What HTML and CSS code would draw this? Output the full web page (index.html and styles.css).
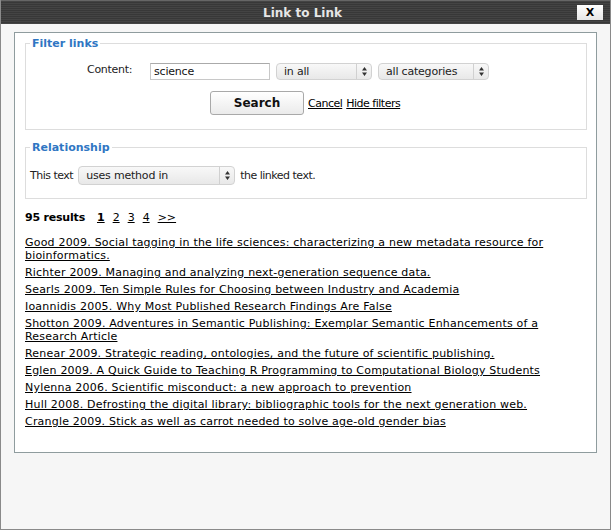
FILE: index.html
```html
<!DOCTYPE html>
<html>
<head>
<meta charset="utf-8">
<link rel="stylesheet" href="styles.css">
</head>
<body>
<div class="dialog">
  <div class="titlebar">
    <span class="title">Link to Link</span>
    <span class="close">X</span>
  </div>
  <div class="panel">
    <fieldset class="box box-filter">
      <legend>Filter links</legend>
      <div class="row-content">
        <span class="label">Content:</span>
        <span class="input">science</span>
        <span class="select sel-in"><span class="sel-text">in all</span><span class="sel-arrow"><svg width="5" height="9" viewBox="0 0 5 9"><path d="M2.5 0 L5 3.5 H0 Z M2.5 9 L5 5.5 H0 Z" fill="#333"/></svg></span></span>
        <span class="select sel-cat"><span class="sel-text">all categories</span><span class="sel-arrow"><svg width="5" height="9" viewBox="0 0 5 9"><path d="M2.5 0 L5 3.5 H0 Z M2.5 9 L5 5.5 H0 Z" fill="#333"/></svg></span></span>
      </div>
      <div class="row-search">
        <span class="button">Search</span>
        <a class="lnk">Cancel</a>
        <a class="lnk">Hide filters</a>
      </div>
    </fieldset>
    <fieldset class="box box-rel">
      <legend>Relationship</legend>
      <div class="row-rel">
        <span class="narrow">This text</span>
        <span class="select sel-rel"><span class="sel-text">uses method in</span><span class="sel-arrow"><svg width="5" height="9" viewBox="0 0 5 9"><path d="M2.5 0 L5 3.5 H0 Z M2.5 9 L5 5.5 H0 Z" fill="#333"/></svg></span></span>
        <span class="narrow">the linked text.</span>
      </div>
    </fieldset>
    <div class="results">
      <span class="count">95 results</span>
      <a class="page current">1</a>
      <a class="page">2</a>
      <a class="page">3</a>
      <a class="page">4</a>
      <a class="page">&gt;&gt;</a>
    </div>
    <ul class="links">
      <li><a>Good 2009. Social tagging in the life sciences: characterizing a new metadata resource for bioinformatics.</a></li>
      <li><a>Richter 2009. Managing and analyzing next-generation sequence data.</a></li>
      <li><a>Searls 2009. Ten Simple Rules for Choosing between Industry and Academia</a></li>
      <li><a>Ioannidis 2005. Why Most Published Research Findings Are False</a></li>
      <li><a>Shotton 2009. Adventures in Semantic Publishing: Exemplar Semantic Enhancements of a Research Article</a></li>
      <li><a>Renear 2009. Strategic reading, ontologies, and the future of scientific publishing.</a></li>
      <li><a>Eglen 2009. A Quick Guide to Teaching R Programming to Computational Biology Students</a></li>
      <li><a>Nylenna 2006. Scientific misconduct: a new approach to prevention</a></li>
      <li><a>Hull 2008. Defrosting the digital library: bibliographic tools for the next generation web.</a></li>
      <li><a>Crangle 2009. Stick as well as carrot needed to solve age-old gender bias</a></li>
    </ul>
  </div>
</div>
</body>
</html>
```
FILE: styles.css
```css
html, body {
  margin: 0;
  padding: 0;
  height: 100%;
}
body {
  font-family: "DejaVu Sans", Verdana, sans-serif;
  font-size: 11px;
  color: #000;
  background: #f5f5f5;
}
.dialog {
  box-sizing: border-box;
  width: 611px;
  height: 530px;
  border: 1px solid #8a8a8a;
  border-top: none;
  background: #f6f6f6;
}
.titlebar {
  position: relative;
  height: 24px;
  background: repeating-linear-gradient(to bottom, #444 0, #444 1px, #383838 1px, #383838 2px);
  border-top: 1px solid #666;
  box-sizing: border-box;
  display: flex;
  align-items: center;
  justify-content: center;
}
.title {
  color: #e6e6e6;
  font-weight: bold;
  font-size: 12px;
  margin-left: -6px;
}
.close {
  position: absolute;
  right: 7px;
  top: 4px;
  width: 26px;
  height: 15px;
  background: linear-gradient(#ffffff, #e6e6e6);
  color: #000;
  font-weight: bold;
  font-size: 11px;
  text-align: center;
  line-height: 15px;
}
.panel {
  box-sizing: border-box;
  margin: 8px 13px 0 13px;
  height: 421px;
  border: 1px solid #8f9c9e;
  background: #fff;
  padding: 4px 9px 0 10px;
}
.box {
  margin: 0;
  padding: 0 4px;
  border: 1px solid #dddddd;
}
.box legend {
  padding: 0 2px;
  color: #2f76c3;
  font-weight: bold;
  font-size: 11px;
}
.box-filter {
  height: 93px;
  box-sizing: border-box;
}
.row-content {
  display: flex;
  align-items: center;
  margin-top: 12px;
  padding-left: 57px;
  height: 18px;
}
.label {
  width: 63px;
  color: #222;
  margin-top: -3px;
  letter-spacing: -0.3px;
}
.input {
  box-sizing: border-box;
  width: 120px;
  height: 17px;
  border: 1px solid #c8c8c8;
  border-top-color: #aaa;
  padding: 0 3px;
  line-height: 15px;
  color: #111;
  letter-spacing: -0.2px;
}
.select {
  box-sizing: border-box;
  display: flex;
  align-items: stretch;
  height: 17px;
  border: 1px solid #d2d2d2;
  border-radius: 4px;
  background: linear-gradient(#f8f8f8, #e8e8e8);
  color: #222;
  line-height: 15px;
  letter-spacing: -0.2px;
}
.sel-text {
  flex: 1;
  padding-left: 7px;
}
.sel-arrow {
  width: 14px;
  border-left: 1px solid #d0d0d0;
  display: flex;
  align-items: center;
  justify-content: center;
}
.sel-in {
  width: 96px;
  margin-left: 6px;
}
.sel-cat {
  width: 111px;
  margin-left: 6px;
}
.row-search {
  display: flex;
  align-items: flex-end;
  margin-top: 11px;
  padding-left: 180px;
}
.button {
  box-sizing: border-box;
  width: 94px;
  height: 24px;
  border: 1px solid #a9a9a9;
  border-radius: 3px;
  background: linear-gradient(#ffffff, #ebebeb);
  font-weight: bold;
  font-size: 12px;
  text-align: center;
  line-height: 22px;
  color: #111;
}
.lnk {
  text-decoration: underline;
  color: #000;
  margin-left: 4px;
  margin-bottom: 5px;
  letter-spacing: -0.5px;
}
.button + .lnk {
  margin-left: 4px;
}
.box-rel {
  margin-top: 11px;
  height: 58px;
  box-sizing: border-box;
}
.row-rel {
  display: flex;
  align-items: center;
  margin-top: 12px;
  padding-left: 0;
  color: #222;
}
.narrow {
  letter-spacing: -0.5px;
}
.sel-rel {
  width: 157px;
  height: 19px;
  margin: 0 5px 0 5px;
  line-height: 17px;
}
.results {
  margin-top: 12px;
  font-weight: bold;
  display: flex;
  align-items: center;
}
.count {
  margin-right: 12px;
  letter-spacing: -0.2px;
}
.page {
  font-weight: normal;
  text-decoration: underline;
  margin-right: 8px;
}
.page.current {
  font-weight: bold;
}
.links {
  list-style: none;
  margin: 12px 0 0 0;
  padding: 0;
}
.links li {
  line-height: 13px;
  margin-bottom: 4px;
  padding-right: 18px;
  letter-spacing: 0.2px;
}
.links a {
  text-decoration: underline;
  color: #000;
}
```
